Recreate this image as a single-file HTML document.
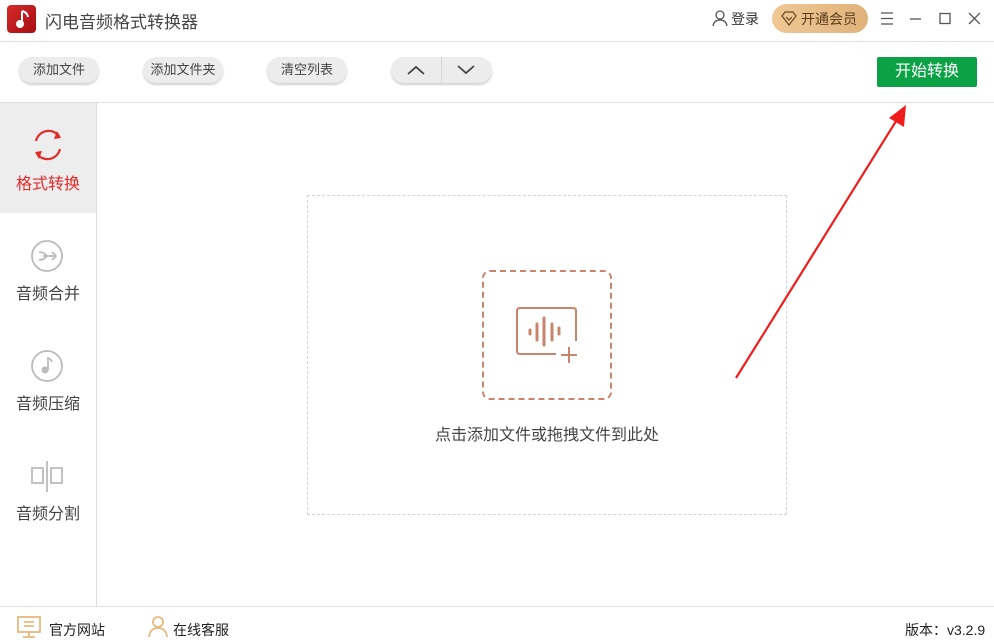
<!DOCTYPE html>
<html><head><meta charset="utf-8"><style>
*{margin:0;padding:0;box-sizing:border-box}
body{width:994px;height:638px;background:#fff;font-family:"Liberation Sans","Noto Sans CJK SC",sans-serif;position:relative;overflow:hidden;color:#333}
.abs{position:absolute}
.btn{position:absolute;top:57px;height:26px;border-radius:13px;background:#ececec;box-shadow:0 2px 2px rgba(0,0,0,.18);font-size:13px;color:#444;text-align:center;line-height:26px}
.nav{position:absolute;left:0;width:96px;height:110px;text-align:center;font-size:16px;color:#444}
.nav .lb{position:absolute;top:67px;width:96px;left:0}
</style></head><body>
<div class="abs" style="left:7px;top:5px;width:29px;height:28px;border-radius:4px;background:linear-gradient(135deg,#d42a2a,#a80d12)"></div>
<svg class="abs" style="left:7px;top:5px" width="29" height="28"><path d="M15 6v12" stroke="#fff" stroke-width="2"/><path d="M15 6q5 1 6 6" stroke="#fff" stroke-width="2" fill="none"/><circle cx="13" cy="19" r="4" fill="#fff"/></svg>
<div class="abs" style="left:45px;top:8px;font-size:17px;color:#444">闪电音频格式转换器</div>
<svg class="abs" style="left:712px;top:10px" width="16" height="17"><circle cx="8" cy="5" r="4" fill="none" stroke="#555" stroke-width="1.3"/><path d="M1 16q1-6 7-6t7 6" fill="none" stroke="#555" stroke-width="1.3"/></svg>
<div class="abs" style="left:731px;top:9px;font-size:14px;color:#333">登录</div>
<div class="abs" style="left:772px;top:4px;width:96px;height:29px;border-radius:15px;background:linear-gradient(90deg,#efc894,#e0b27a)"></div>
<svg class="abs" style="left:781px;top:11px" width="16" height="15"><path d="M4 1h8l3 4-7 9-7-9z M5 6l3 3 3-3" fill="none" stroke="#6b4a22" stroke-width="1.2"/></svg>
<div class="abs" style="left:801px;top:9px;font-size:14px;color:#5a3e1c">开通会员</div>
<svg class="abs" style="left:880px;top:12px" width="100" height="14"><path d="M1 1h12M1 6.5h12M1 12h12" stroke="#555" stroke-width="1.2"/><path d="M30 7h11" stroke="#555" stroke-width="1.3"/><rect x="60" y="1.5" width="10" height="10" fill="none" stroke="#555" stroke-width="1.3"/><path d="M89 1l11 11M100 1l-11 11" stroke="#555" stroke-width="1.3"/></svg>
<div class="abs" style="left:0;top:41px;width:994px;height:1px;background:#ddd"></div>
<div class="btn" style="left:19px;width:80px">添加文件</div>
<div class="btn" style="left:143px;width:80px">添加文件夹</div>
<div class="btn" style="left:267px;width:80px">清空列表</div>
<div class="btn" style="left:391px;width:101px"></div>
<div class="abs" style="left:441px;top:57px;width:1px;height:26px;background:#d6d6d6"></div>
<svg class="abs" style="left:406px;top:63px" width="75" height="14"><path d="M2 11l8-7 8 7" fill="none" stroke="#444" stroke-width="1.8"/><path d="M52 3l8 7 8-7" fill="none" stroke="#444" stroke-width="1.8"/></svg>
<div class="abs" style="left:877px;top:57px;width:100px;height:30px;background:#0aa245;border-radius:2px;color:#fff;font-size:16px;text-align:center;line-height:30px">开始转换</div>
<div class="abs" style="left:0;top:102px;width:994px;height:1px;background:#ddd"></div>
<div class="abs" style="left:96px;top:103px;width:1px;height:503px;background:#ddd"></div>
<div class="nav" style="top:103px;background:#ededed;color:#e02b2b">
<svg class="abs" style="left:30px;top:24px" width="36" height="36"><path d="M6 14A13 13 0 0 1 29 9" fill="none" stroke="#e02b2b" stroke-width="2.2"/><path d="M30 22A13 13 0 0 1 7 27" fill="none" stroke="#e02b2b" stroke-width="2.2"/><path d="M27 4l4 7-7 1z" fill="#e02b2b"/><path d="M9 32l-4-7 7-1z" fill="#e02b2b"/></svg>
<div class="lb">格式转换</div></div>
<div class="nav" style="top:213px">
<svg class="abs" style="left:31px;top:26px" width="34" height="34"><circle cx="16" cy="17" r="15" fill="none" stroke="#bbb" stroke-width="1.8"/><path d="M8 13q5 0 8 4q-3 4-8 4M12 17h13M21 13l4 4-4 4" fill="none" stroke="#bbb" stroke-width="1.8"/></svg>
<div class="lb">音频合并</div></div>
<div class="nav" style="top:323px">
<svg class="abs" style="left:31px;top:26px" width="34" height="34"><circle cx="16" cy="17" r="15" fill="none" stroke="#bbb" stroke-width="1.8"/><circle cx="14" cy="21" r="3.5" fill="#bbb"/><path d="M17 21V9q3 1 4 4" fill="none" stroke="#bbb" stroke-width="1.8"/></svg>
<div class="lb">音频压缩</div></div>
<div class="nav" style="top:433px">
<svg class="abs" style="left:30px;top:26px" width="36" height="34"><rect x="2" y="9" width="11" height="15" fill="none" stroke="#bbb" stroke-width="1.8"/><rect x="21" y="9" width="11" height="15" fill="none" stroke="#bbb" stroke-width="1.8"/><path d="M17 2v31" stroke="#bbb" stroke-width="1.8"/></svg>
<div class="lb">音频分割</div></div>
<div class="abs" style="left:307px;top:195px;width:480px;height:320px;border:1px dashed #d4d4d4"></div>
<div class="abs" style="left:482px;top:270px;width:130px;height:130px;border:2px dashed #c9846b;border-radius:8px"></div>
<svg class="abs" style="left:516px;top:306px" width="64" height="60"><path d="M40 48H4q-3 0-3-3V5q0-3 3-3h53q3 0 3 3v30" fill="none" stroke="#c9846b" stroke-width="2"/><path d="M14 24v4M21 18v16M28 12v27M36 18v16M43 22v6" stroke="#c9846b" stroke-width="3" stroke-linecap="round"/><path d="M45 49h16M53 41v16" stroke="#c9846b" stroke-width="2"/></svg>
<div class="abs" style="left:307px;top:421px;width:480px;text-align:center;font-size:16px;color:#444">点击添加文件或拖拽文件到此处</div>
<svg class="abs" style="left:0;top:0" width="994" height="638"><path d="M736 378L898 118" stroke="#f01c1c" stroke-width="2.2"/><path d="M906 105l-2 22-15-9z" fill="#f01c1c"/></svg>
<div class="abs" style="left:0;top:606px;width:994px;height:1px;background:#ddd"></div>
<svg class="abs" style="left:16px;top:616px" width="28" height="22"><rect x="2" y="1" width="22" height="15" fill="none" stroke="#e8b97e" stroke-width="1.8"/><path d="M8 6h10M8 10h10M13 16v4M7 21h12" stroke="#e8b97e" stroke-width="1.8"/></svg>
<div class="abs" style="left:49px;top:620px;font-size:14px;color:#222">官方网站</div>
<svg class="abs" style="left:147px;top:615px" width="22" height="23"><circle cx="11" cy="7" r="5" fill="none" stroke="#e8b97e" stroke-width="1.8"/><path d="M2 22q1-9 9-9t9 9" fill="none" stroke="#e8b97e" stroke-width="1.8"/></svg>
<div class="abs" style="left:173px;top:620px;font-size:14px;color:#222">在线客服</div>
<div class="abs" style="left:905px;top:620px;font-size:14px;color:#222">版本：v3.2.9</div>
</body></html>
